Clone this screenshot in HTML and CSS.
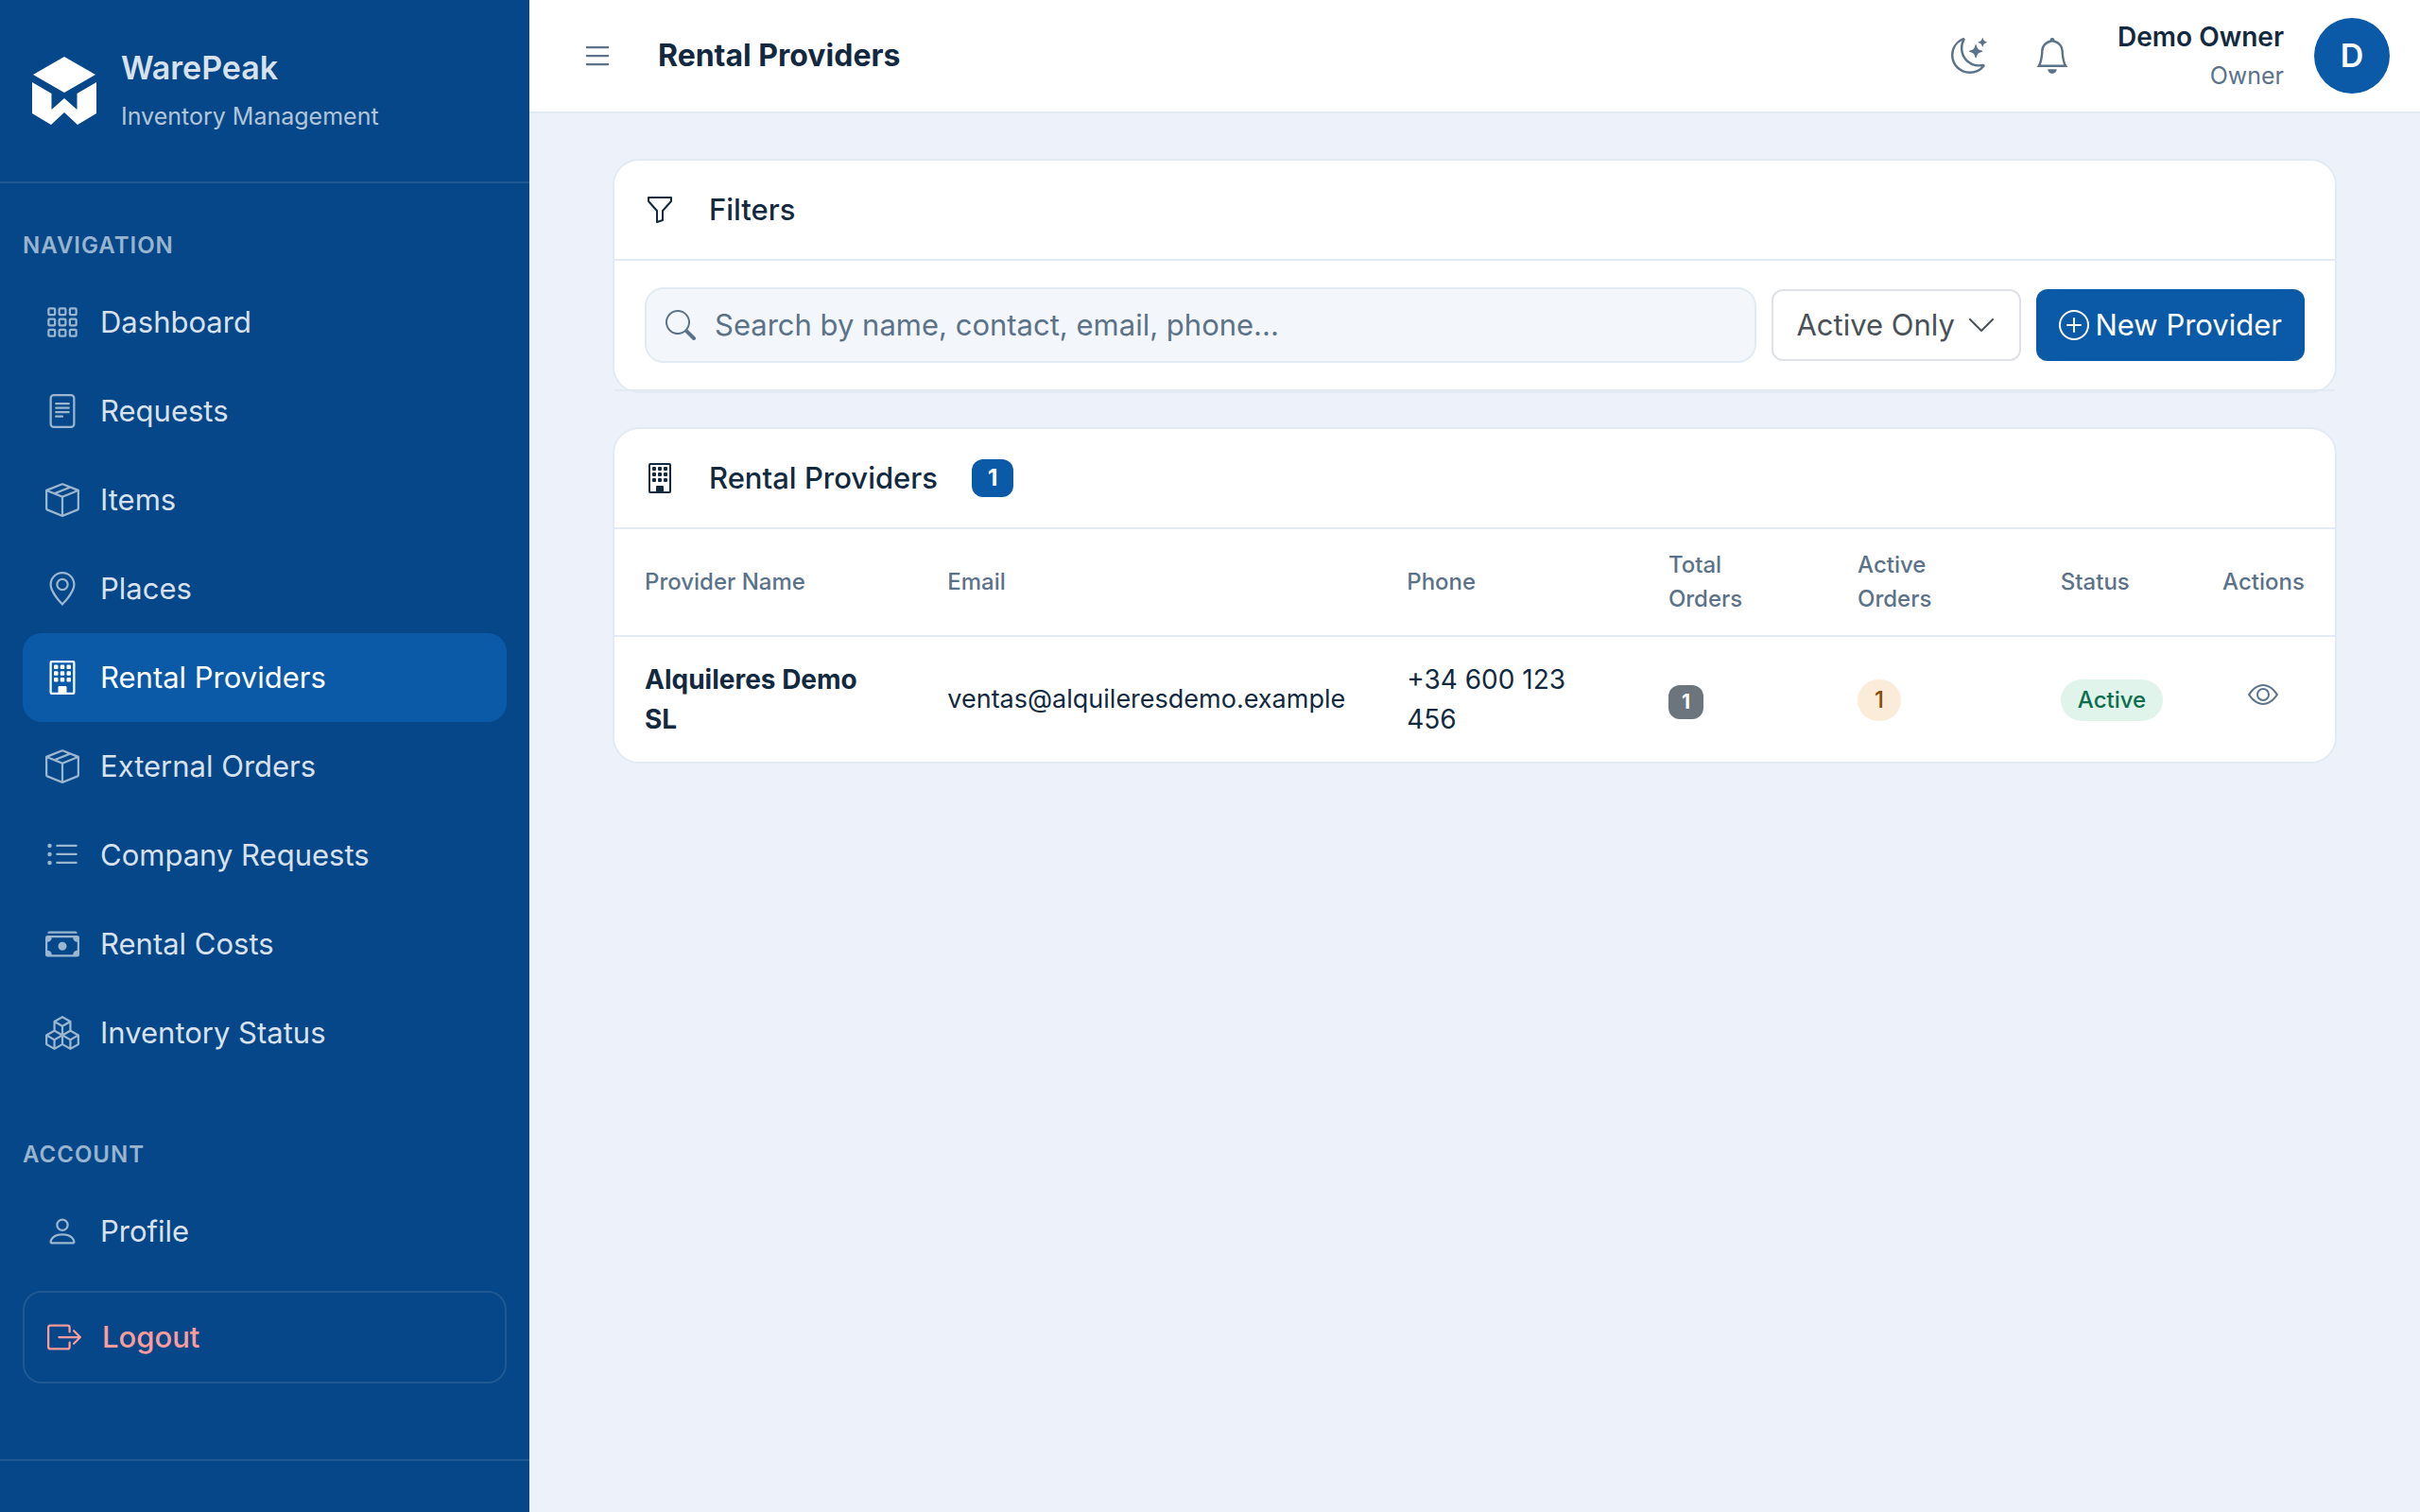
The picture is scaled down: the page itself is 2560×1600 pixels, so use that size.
FILE: index.html
```html
<!DOCTYPE html>
<html lang="en">
<head>
    <meta charset="UTF-8">
    <meta name="viewport" content="width=device-width, initial-scale=1.0">
    <title>Rental Providers - WarePeak</title>
    <link rel="stylesheet" href="styles.css">
</head>
<body>
    <!-- Shared icons -->
    <svg class="sprite" aria-hidden="true">
        <symbol id="i-box" viewBox="0 0 16 16"><path d="M8.186 1.113a.5.5 0 0 0-.372 0L1.846 3.5l2.404.961L10.404 2zm3.564 1.426L5.596 5 8 5.961 14.154 3.5zm3.25 1.7-6.5 2.6v7.922l6.5-2.6V4.24zM7.5 14.762V6.838L1 4.239v7.923zM7.443.184a1.5 1.5 0 0 1 1.114 0l7.129 2.852A.5.5 0 0 1 16 3.5v8.662a1 1 0 0 1-.629.928l-7.185 2.874a.5.5 0 0 1-.372 0L.63 13.09a1 1 0 0 1-.63-.928V3.5a.5.5 0 0 1 .314-.464z"/></symbol>
        <symbol id="i-building" viewBox="0 0 16 16"><path d="M4 2.500a.5.5 0 0 1 .5-.5h1a.5.5 0 0 1 .5.5v1a.5.5 0 0 1-.5.5h-1a.5.5 0 0 1-.5-.5zm3 0a.5.5 0 0 1 .5-.5h1a.5.5 0 0 1 .5.5v1a.5.5 0 0 1-.5.5h-1a.5.5 0 0 1-.5-.5zm3.500-.5a.5.5 0 0 0-.5.5v1a.5.5 0 0 0 .5.5h1a.5.5 0 0 0 .5-.5v-1a.5.5 0 0 0-.5-.5zM4 5.500a.5.5 0 0 1 .5-.5h1a.5.5 0 0 1 .5.5v1a.5.5 0 0 1-.5.5h-1a.5.5 0 0 1-.5-.5zM7.500 5a.5.5 0 0 0-.5.5v1a.5.5 0 0 0 .5.5h1a.5.5 0 0 0 .5-.5v-1a.5.5 0 0 0-.5-.5zm2.500.5a.5.5 0 0 1 .5-.5h1a.5.5 0 0 1 .5.5v1a.5.5 0 0 1-.5.5h-1a.5.5 0 0 1-.5-.5zM4.500 8a.5.5 0 0 0-.5.5v1a.5.5 0 0 0 .5.5h1a.5.5 0 0 0 .5-.5v-1a.5.5 0 0 0-.5-.5zm2.500.5a.5.5 0 0 1 .5-.5h1a.5.5 0 0 1 .5.5v1a.5.5 0 0 1-.5.5h-1a.5.5 0 0 1-.5-.5zm3.500-.5a.5.5 0 0 0-.5.5v1a.5.5 0 0 0 .5.5h1a.5.5 0 0 0 .5-.5v-1a.5.5 0 0 0-.5-.5z"/><path d="M2 1a1 1 0 0 1 1-1h10a1 1 0 0 1 1 1v14a1 1 0 0 1-1 1H3a1 1 0 0 1-1-1zm11 0H3v14h3v-2.500a.5.5 0 0 1 .5-.5h3a.5.5 0 0 1 .5.5V15h3z"/></symbol>
    </svg>

    <div class="app">
        <aside class="sidebar">
            <div class="brand">
                <svg class="brand-logo" viewBox="0 0 68 72" fill="#fff">
                    <path d="M34 0 67 19 34 38 1 19z"/>
                    <path d="M0 27 20.500 39V56L34 44 47.500 56V39L68 27V60L48 72 34 59 20 72 0 60z"/>
                </svg>
                <div class="brand-text">
                    <div class="brand-name">WarePeak</div>
                    <div class="brand-sub">Inventory Management</div>
                </div>
            </div>

            <nav class="nav">
                <div class="nav-label">Navigation</div>
                <a class="nav-link" href="#">
                    <svg class="icon" viewBox="0 0 16 16"><path d="M4 2v2H2V2zm1 12v-2a1 1 0 0 0-1-1H2a1 1 0 0 0-1 1v2a1 1 0 0 0 1 1h2a1 1 0 0 0 1-1m0-5V7a1 1 0 0 0-1-1H2a1 1 0 0 0-1 1v2a1 1 0 0 0 1 1h2a1 1 0 0 0 1-1m0-5V2a1 1 0 0 0-1-1H2a1 1 0 0 0-1 1v2a1 1 0 0 0 1 1h2a1 1 0 0 0 1-1m5 10v-2a1 1 0 0 0-1-1H7a1 1 0 0 0-1 1v2a1 1 0 0 0 1 1h2a1 1 0 0 0 1-1m0-5V7a1 1 0 0 0-1-1H7a1 1 0 0 0-1 1v2a1 1 0 0 0 1 1h2a1 1 0 0 0 1-1m0-5V2a1 1 0 0 0-1-1H7a1 1 0 0 0-1 1v2a1 1 0 0 0 1 1h2a1 1 0 0 0 1-1M9 2v2H7V2zm5 0v2h-2V2zM4 7v2H2V7zm5 0v2H7V7zm5 0h-2v2h2zM4 12v2H2v-2zm5 0v2H7v-2zm5 0v2h-2v-2zM12 1a1 1 0 0 0-1 1v2a1 1 0 0 0 1 1h2a1 1 0 0 0 1-1V2a1 1 0 0 0-1-1zm-1 6a1 1 0 0 1 1-1h2a1 1 0 0 1 1 1v2a1 1 0 0 1-1 1h-2a1 1 0 0 1-1-1zm1 4a1 1 0 0 0-1 1v2a1 1 0 0 0 1 1h2a1 1 0 0 0 1-1v-2a1 1 0 0 0-1-1z"/></svg>
                    Dashboard
                </a>
                <a class="nav-link" href="#">
                    <svg class="icon" viewBox="0 0 16 16"><path d="M5 4a.5.5 0 0 0 0 1h6a.5.5 0 0 0 0-1zm-.5 2.500A.5.5 0 0 1 5 6h6a.5.5 0 0 1 0 1H5a.5.5 0 0 1-.5-.5M5 8a.5.5 0 0 0 0 1h6a.5.5 0 0 0 0-1zm0 2a.5.5 0 0 0 0 1h3a.5.5 0 0 0 0-1z"/><path d="M2 2a2 2 0 0 1 2-2h8a2 2 0 0 1 2 2v12a2 2 0 0 1-2 2H4a2 2 0 0 1-2-2zm10-1H4a1 1 0 0 0-1 1v12a1 1 0 0 0 1 1h8a1 1 0 0 0 1-1V2a1 1 0 0 0-1-1"/></svg>
                    Requests
                </a>
                <a class="nav-link" href="#">
                    <svg class="icon"><use href="#i-box"/></svg>
                    Items
                </a>
                <a class="nav-link" href="#">
                    <svg class="icon" viewBox="0 0 16 16"><path d="M12.166 8.940c-.524 1.062-1.234 2.120-1.960 3.070A32 32 0 0 1 8 14.580a32 32 0 0 1-2.206-2.570c-.726-.950-1.436-2.008-1.960-3.070C3.304 7.867 3 6.862 3 6a5 5 0 0 1 10 0c0 .862-.305 1.867-.834 2.940M8 16s6-5.686 6-10A6 6 0 0 0 2 6c0 4.314 6 10 6 10"/><path d="M8 8a2 2 0 1 1 0-4 2 2 0 0 1 0 4m0 1a3 3 0 1 0 0-6 3 3 0 0 0 0 6"/></svg>
                    Places
                </a>
                <a class="nav-link active" href="#" aria-current="page">
                    <svg class="icon"><use href="#i-building"/></svg>
                    Rental Providers
                </a>
                <a class="nav-link" href="#">
                    <svg class="icon"><use href="#i-box"/></svg>
                    External Orders
                </a>
                <a class="nav-link" href="#">
                    <svg class="icon" viewBox="0 0 16 16"><path fill-rule="evenodd" d="M5 11.500a.5.5 0 0 1 .5-.5h9a.5.5 0 0 1 0 1h-9a.5.5 0 0 1-.5-.5m0-4a.5.5 0 0 1 .5-.5h9a.5.5 0 0 1 0 1h-9a.5.5 0 0 1-.5-.5m0-4a.5.5 0 0 1 .5-.5h9a.5.5 0 0 1 0 1h-9a.5.5 0 0 1-.5-.5m-3 1a1 1 0 1 0 0-2 1 1 0 0 0 0 2m0 4a1 1 0 1 0 0-2 1 1 0 0 0 0 2m0 4a1 1 0 1 0 0-2 1 1 0 0 0 0 2"/></svg>
                    Company Requests
                </a>
                <a class="nav-link" href="#">
                    <svg class="icon" viewBox="0 0 16 16"><path d="M1 3a1 1 0 0 1 1-1h12a1 1 0 0 1 1 1zm7 8a2 2 0 1 0 0-4 2 2 0 0 0 0 4"/><path d="M0 5a1 1 0 0 1 1-1h14a1 1 0 0 1 1 1v8a1 1 0 0 1-1 1H1a1 1 0 0 1-1-1zm3 0a2 2 0 0 1-2 2v4a2 2 0 0 1 2 2h10a2 2 0 0 1 2-2V7a2 2 0 0 1-2-2z"/></svg>
                    Rental Costs
                </a>
                <a class="nav-link" href="#">
                    <svg class="icon" viewBox="0 0 16 16"><path d="M7.752.066a.5.5 0 0 1 .496 0l3.750 2.143a.5.5 0 0 1 .252.434v3.995l3.498 2A.5.5 0 0 1 16 9.070v4.286a.5.5 0 0 1-.252.434l-3.750 2.143a.5.5 0 0 1-.496 0l-3.502-2-3.502 2.001a.5.5 0 0 1-.496 0l-3.750-2.143A.5.5 0 0 1 0 13.357V9.071a.5.5 0 0 1 .252-.434L3.750 6.638V2.643a.5.5 0 0 1 .252-.434zM4.250 7.504 1.508 9.071l2.742 1.567 2.742-1.567zM7.500 9.933l-2.750 1.571v3.134l2.750-1.571zm1 3.134 2.750 1.571v-3.134L8.500 9.933zm.508-3.996 2.742 1.567 2.742-1.567-2.742-1.567zm2.242-2.433V3.504L8.500 5.076V8.210zM7.500 8.210V5.076L4.750 3.504v3.134zM5.258 2.643 8 4.210l2.742-1.567L8 1.076zM15 9.933l-2.750 1.571v3.134L15 13.067zM3.750 14.638v-3.134L1 9.933v3.134z"/></svg>
                    Inventory Status
                </a>

                <div class="nav-label nav-label-account">Account</div>
                <a class="nav-link" href="#">
                    <svg class="icon" viewBox="0 0 16 16"><path d="M8 8a3 3 0 1 0 0-6 3 3 0 0 0 0 6m2-3a2 2 0 1 1-4 0 2 2 0 0 1 4 0m4 8c0 1-1 1-1 1H3s-1 0-1-1 1-4 6-4 6 3 6 4m-1-.004c-.001-.246-.154-.986-.832-1.664C11.516 10.680 10.289 10 8 10s-3.516.680-4.168 1.332c-.678.678-.830 1.418-.832 1.664z"/></svg>
                    Profile
                </a>
                <button class="logout" type="button">
                    <svg class="icon" viewBox="0 0 16 16"><path fill-rule="evenodd" d="M10 12.500a.5.5 0 0 1-.5.5h-8a.5.5 0 0 1-.5-.5v-9a.5.5 0 0 1 .5-.5h8a.5.5 0 0 1 .5.5v2a.5.5 0 0 0 1 0v-2A1.500 1.500 0 0 0 9.500 2h-8A1.500 1.500 0 0 0 0 3.500v9A1.500 1.500 0 0 0 1.500 14h8a1.500 1.500 0 0 0 1.500-1.500v-2a.5.5 0 0 0-1 0z"/><path fill-rule="evenodd" d="M15.854 8.354a.5.5 0 0 0 0-.708l-3-3a.5.5 0 0 0-.708.708L14.293 7.500H5.500a.5.5 0 0 0 0 1h8.793l-2.147 2.146a.5.5 0 0 0 .708.708z"/></svg>
                    Logout
                </button>
            </nav>
            <div class="sidebar-footer"></div>
        </aside>

        <div class="main">
            <header class="topbar">
                <button class="icon-btn" type="button" aria-label="Toggle sidebar">
                    <svg class="icon" viewBox="0 0 16 16"><path fill-rule="evenodd" d="M2.500 12a.5.5 0 0 1 .5-.5h10a.5.5 0 0 1 0 1H3a.5.5 0 0 1-.5-.5m0-4a.5.5 0 0 1 .5-.5h10a.5.5 0 0 1 0 1H3a.5.5 0 0 1-.5-.5m0-4a.5.5 0 0 1 .5-.5h10a.5.5 0 0 1 0 1H3a.5.5 0 0 1-.5-.5"/></svg>
                </button>
                <h1 class="page-title">Rental Providers</h1>
                <div class="topbar-actions">
                    <button class="icon-btn" type="button" aria-label="Toggle theme">
                        <svg class="icon icon-lg" viewBox="0 0 16 16"><path d="M6 .278a.77.77 0 0 1 .080.858 7.200 7.200 0 0 0-.878 3.460c0 4.021 3.278 7.277 7.318 7.277q.792-.001 1.533-.160a.79.79 0 0 1 .810.316.73.73 0 0 1-.031.893A8.350 8.350 0 0 1 8.344 16C3.734 16 0 12.286 0 7.710 0 4.266 2.114 1.312 5.124.060A.75.75 0 0 1 6 .278M4.858 1.311A7.270 7.270 0 0 0 1.025 7.710c0 4.020 3.279 7.276 7.319 7.276a7.320 7.320 0 0 0 5.205-2.162q-.506.063-1.029.063c-4.610 0-8.343-3.714-8.343-8.290 0-1.167.242-2.278.681-3.286"/><path d="M10.794 3.148a.217.217 0 0 1 .412 0l.387 1.162c.173.518.579.924 1.097 1.097l1.162.387a.217.217 0 0 1 0 .412l-1.162.387a1.730 1.730 0 0 0-1.097 1.097l-.387 1.162a.217.217 0 0 1-.412 0l-.387-1.162A1.730 1.730 0 0 0 9.310 6.593l-1.162-.387a.217.217 0 0 1 0-.412l1.162-.387a1.730 1.730 0 0 0 1.097-1.097zM13.863.099a.145.145 0 0 1 .274 0l.258.774c.115.346.386.617.732.732l.774.258a.145.145 0 0 1 0 .274l-.774.258a1.160 1.160 0 0 0-.732.732l-.258.774a.145.145 0 0 1-.274 0l-.258-.774a1.160 1.160 0 0 0-.732-.732l-.774-.258a.145.145 0 0 1 0-.274l.774-.258c.346-.115.617-.386.732-.732z"/></svg>
                    </button>
                    <button class="icon-btn" type="button" aria-label="Notifications">
                        <svg class="icon icon-lg" viewBox="0 0 16 16"><path d="M8 16a2 2 0 0 0 2-2H6a2 2 0 0 0 2 2M8 1.918l-.797.161A4 4 0 0 0 4 6c0 .628-.134 2.197-.459 3.742-.160.767-.376 1.566-.663 2.258h10.244c-.287-.692-.502-1.490-.663-2.258C12.134 8.197 12 6.628 12 6a4 4 0 0 0-3.203-3.920zM14.220 12c.223.447.481.801.780 1H1c.299-.199.557-.553.780-1C2.680 10.200 3 6.880 3 6c0-2.420 1.720-4.440 4.005-4.901a1 1 0 1 1 1.990 0A5 5 0 0 1 13 6c0 .880.320 4.200 1.220 6"/></svg>
                    </button>
                    <div class="user">
                        <div class="user-info">
                            <div class="user-name">Demo Owner</div>
                            <div class="user-role">Owner</div>
                        </div>
                        <div class="avatar">D</div>
                    </div>
                </div>
            </header>

            <main class="content">
                <section class="card">
                    <div class="card-header">
                        <svg class="icon" viewBox="0 0 16 16"><path d="M1.500 1.500A.5.5 0 0 1 2 1h12a.5.5 0 0 1 .5.5v2a.5.5 0 0 1-.128.334L10 8.692V13.500a.5.5 0 0 1-.342.474l-3 1A.5.5 0 0 1 6 14.500V8.692L1.628 3.834A.5.5 0 0 1 1.500 3.500zm1 .5v1.308l4.372 4.858A.5.5 0 0 1 7 8.500v5.306l2-.666V8.500a.5.5 0 0 1 .128-.334L13.500 3.308V2z"/></svg>
                        <h2>Filters</h2>
                    </div>
                    <form class="filters">
                        <div class="search">
                            <svg class="icon" viewBox="0 0 16 16"><path d="M11.742 10.344a6.500 6.500 0 1 0-1.397 1.398h-.001q.044.060.098.115l3.850 3.850a1 1 0 0 0 1.415-1.414l-3.850-3.850a1 1 0 0 0-.115-.100zM12 6.500a5.500 5.500 0 1 1-11 0 5.500 5.500 0 0 1 11 0"/></svg>
                            <input type="search" placeholder="Search by name, contact, email, phone..." aria-label="Search providers">
                        </div>
                        <select class="status-select" aria-label="Status filter">
                            <option>Active Only</option>
                            <option>All</option>
                        </select>
                        <button class="btn-primary" type="button">
                            <svg class="icon" viewBox="0 0 16 16"><path d="M8 15A7 7 0 1 1 8 1a7 7 0 0 1 0 14m0 1A8 8 0 1 0 8 0a8 8 0 0 0 0 16"/><path d="M8 4a.5.5 0 0 1 .5.5v3h3a.5.5 0 0 1 0 1h-3v3a.5.5 0 0 1-1 0v-3h-3a.5.5 0 0 1 0-1h3v-3A.5.5 0 0 1 8 4"/></svg>
                            New Provider
                        </button>
                    </form>
                </section>

                <section class="card">
                    <div class="card-header">
                        <svg class="icon"><use href="#i-building"/></svg>
                        <h2>Rental Providers</h2>
                        <span class="badge badge-primary">1</span>
                    </div>
                    <table class="providers">
                        <colgroup>
                            <col class="col-name">
                            <col class="col-email">
                            <col class="col-phone">
                            <col class="col-total">
                            <col class="col-active">
                            <col class="col-status">
                            <col>
                        </colgroup>
                        <thead>
                            <tr>
                                <th>Provider Name</th>
                                <th>Email</th>
                                <th>Phone</th>
                                <th>Total<br>Orders</th>
                                <th>Active<br>Orders</th>
                                <th>Status</th>
                                <th class="actions">Actions</th>
                            </tr>
                        </thead>
                        <tbody>
                            <tr>
                                <td><strong>Alquileres Demo SL</strong></td>
                                <td class="email">ventas@alquileresdemo.example</td>
                                <td>+34 600 123 456</td>
                                <td><span class="badge badge-secondary">1</span></td>
                                <td><span class="pill pill-warning">1</span></td>
                                <td><span class="pill pill-success">Active</span></td>
                                <td class="actions">
                                    <button class="view-btn" type="button" aria-label="View provider">
                                        <svg class="icon" viewBox="0 0 16 16"><path d="M16 8s-3-5.500-8-5.500S0 8 0 8s3 5.500 8 5.500S16 8 16 8M1.173 8a13 13 0 0 1 1.660-2.043C4.120 4.668 5.880 3.500 8 3.500s3.879 1.168 5.168 2.457A13 13 0 0 1 14.828 8q-.086.130-.195.288c-.335.480-.830 1.120-1.465 1.755C11.879 11.332 10.119 12.500 8 12.500s-3.879-1.168-5.168-2.457A13 13 0 0 1 1.172 8z"/><path d="M8 5.500a2.500 2.500 0 1 0 0 5 2.500 2.500 0 0 0 0-5M4.500 8a3.500 3.500 0 1 1 7 0 3.500 3.500 0 0 1-7 0"/></svg>
                                    </button>
                                </td>
                            </tr>
                        </tbody>
                    </table>
                </section>
            </main>
        </div>
    </div>
</body>
</html>
```

FILE: styles.css
```css
:root {
    --primary: #0b5aa8;
    --sidebar: #054788;
    --text: #12293f;
    --muted: #5b7288;
    --border: #e2ebf3;
    --bg: #edf2fa;
}
* {
    box-sizing: border-box;
}
body {
    margin: 0;
    font-family: Inter, "Liberation Sans", sans-serif;
    font-size: 31px;
    line-height: 48px;
    color: var(--text);
    background-color: var(--bg);
}
button, input, select {
    font: inherit;
    color: inherit;
}
button {
    cursor: pointer;
}
.sprite {
    display: none;
}
.icon {
    width: 32px;
    height: 32px;
    flex-shrink: 0;
    fill: currentColor;
}
.icon-lg {
    width: 38px;
    height: 38px;
}
.app {
    display: flex;
    min-height: 100vh;
}

/* Sidebar */
.sidebar {
    display: flex;
    flex-direction: column;
    width: 560px;
    flex-shrink: 0;
    background-color: var(--sidebar);
    color: rgba(255, 255, 255, 0.86);
}
.brand {
    display: flex;
    align-items: center;
    gap: 26px;
    padding: 46px 34px;
    border-bottom: 2px solid rgba(255, 255, 255, 0.1);
}
.brand-logo {
    width: 68px;
    height: 72px;
}
.brand-text {
    display: flex;
    flex-direction: column;
    gap: 2px;
}
.brand-name {
    font-size: 34px;
    font-weight: 600;
    line-height: 52px;
}
.brand-sub {
    font-size: 25px;
    line-height: 46px;
    color: rgba(255, 255, 255, 0.7);
}
.nav {
    flex: 1;
    padding: 48px 24px;
}
.nav-label {
    font-size: 24px;
    font-weight: 600;
    line-height: 36px;
    letter-spacing: 1px;
    text-transform: uppercase;
    color: rgba(255, 255, 255, 0.6);
    margin-bottom: 16px;
}
.nav-label-account {
    margin-top: 64px;
}
.nav-link {
    display: flex;
    align-items: center;
    gap: 22px;
    height: 94px;
    padding: 0 24px;
    border-radius: 20px;
    color: inherit;
    text-decoration: none;
}
.nav-link .icon,
.logout .icon {
    width: 36px;
    height: 36px;
}
.nav-link .icon {
    opacity: 0.7;
}
.nav-link.active {
    background-color: var(--primary);
    color: #fff;
}
.nav-link.active .icon {
    opacity: 1;
}
.logout {
    display: flex;
    align-items: center;
    gap: 22px;
    width: 100%;
    height: 98px;
    margin-top: 16px;
    padding: 0 24px;
    border: 2px solid rgba(255, 255, 255, 0.1);
    border-radius: 20px;
    background: none;
    color: #ff9b9b;
    font-weight: 500;
}
.sidebar-footer {
    height: 56px;
    border-top: 2px solid rgba(255, 255, 255, 0.1);
}

/* Top bar */
.main {
    flex: 1;
    min-width: 0;
}
.topbar {
    display: flex;
    align-items: center;
    height: 120px;
    padding: 0 32px 0 54px;
    background-color: #fff;
    border-bottom: 2px solid var(--border);
}
.icon-btn {
    display: flex;
    padding: 0;
    border: none;
    background: none;
    color: var(--muted);
}
.topbar > .icon-btn .icon {
    width: 36px;
    height: 36px;
}
.page-title {
    margin: 0 0 0 46px;
    font-size: 32px;
    font-weight: 700;
}
.topbar-actions {
    display: flex;
    align-items: center;
    gap: 50px;
    margin-left: auto;
}
.user {
    display: flex;
    align-items: center;
    gap: 32px;
}
.user-info {
    text-align: right;
}
.user-name {
    font-size: 28px;
    font-weight: 600;
    line-height: 42px;
}
.user-role {
    font-size: 25px;
    line-height: 40px;
    color: var(--muted);
}
.avatar {
    display: flex;
    align-items: center;
    justify-content: center;
    width: 80px;
    height: 80px;
    border-radius: 50%;
    background-color: var(--primary);
    color: #fff;
    font-size: 34px;
    font-weight: 600;
}

/* Content */
.content {
    display: flex;
    flex-direction: column;
    gap: 36px;
    padding: 48px 88px;
}
.card {
    background-color: #fff;
    border: 2px solid var(--border);
    border-radius: 28px;
}
.card-header {
    display: flex;
    align-items: center;
    gap: 36px;
    padding: 28px 32px;
    border-bottom: 2px solid var(--border);
}
.card-header h2 {
    margin: 0;
    font-size: 31px;
    font-weight: 500;
}
.filters {
    display: flex;
    align-items: center;
    gap: 16px;
    padding: 28px 32px;
    border-bottom: 2px solid var(--border);
}
.search {
    display: flex;
    align-items: center;
    flex: 1;
    gap: 20px;
    height: 80px;
    padding: 0 20px;
    border: 2px solid var(--border);
    border-radius: 20px;
    background-color: #f3f7fc;
    color: var(--muted);
}
.search input {
    flex: 1;
    padding: 0;
    border: none;
    outline: none;
    background: none;
}
.search input::placeholder {
    color: var(--muted);
    opacity: 1;
}
.status-select {
    width: 264px;
    height: 76px;
    padding: 0 24px;
    border: 2px solid #dee2e6;
    border-radius: 12px;
    appearance: none;
    color: #495057;
    background: #fff url("data:image/svg+xml,%3Csvg xmlns='http://www.w3.org/2000/svg' viewBox='0 0 16 16'%3E%3Cpath fill='none' stroke='%23495057' stroke-linecap='round' stroke-linejoin='round' d='m2 5 6 6 6-6'/%3E%3C/svg%3E") no-repeat right 24px center / 32px;
}
.btn-primary {
    display: flex;
    align-items: center;
    gap: 6px;
    height: 76px;
    padding: 0 24px;
    border: none;
    border-radius: 12px;
    background-color: var(--primary);
    color: #fff;
}

/* Badges */
.badge {
    display: inline-block;
    border-radius: 12px;
    color: #fff;
    font-weight: 700;
    text-align: center;
}
.badge-primary {
    padding: 0 17px;
    font-size: 24px;
    line-height: 40px;
    background-color: var(--primary);
}
.badge-secondary {
    padding: 0 14px;
    font-size: 21px;
    line-height: 36px;
    background-color: #6c757d;
}
.pill {
    display: inline-block;
    padding: 0 18px;
    border-radius: 22px;
    font-size: 24px;
    font-weight: 500;
    line-height: 44px;
}
.pill-warning {
    background-color: #fbecd9;
    color: #8a4b0b;
}
.pill-success {
    background-color: #e0f4ec;
    color: #0d6e4f;
}

/* Table */
.providers {
    width: 100%;
    table-layout: fixed;
    border-collapse: collapse;
}
.col-name { width: 17.6%; }
.col-email { width: 26.7%; }
.col-phone { width: 15.2%; }
.col-total { width: 11%; }
.col-active { width: 11.8%; }
.col-status { width: 9.4%; }
.providers th {
    padding: 20px 32px;
    border-bottom: 2px solid var(--border);
    color: var(--muted);
    font-size: 24px;
    font-weight: 500;
    line-height: 36px;
    text-align: left;
}
.providers td {
    padding: 24px 32px;
    font-size: 28px;
    line-height: 42px;
}
.providers .email {
    font-size: 27px;
}
.providers strong {
    font-weight: 700;
}
.providers .actions {
    text-align: center;
}
.view-btn {
    padding: 0;
    border: none;
    background: none;
    color: var(--muted);
}
```
